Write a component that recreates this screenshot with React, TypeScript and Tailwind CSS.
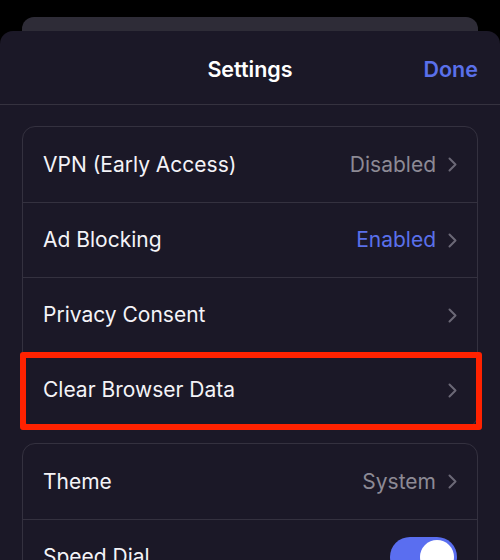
import React from "react";

function Chevron() {
  return (
    <svg width="9" height="15" viewBox="0 0 9 15" className="ml-[12px] shrink-0">
      <polyline points="1.5,1.5 7.5,7.5 1.5,13.5" fill="none" stroke="#6b6876" strokeWidth="2" strokeLinecap="round" strokeLinejoin="round" />
    </svg>
  );
}

function Row({label, value, valueClass, first, children}: any) {
  return (
    <div className={`flex items-center h-[75px] pl-[20px] pr-[20px] ${first ? "" : "border-t border-[#34313f]"}`}>
      <span className="flex-1 text-[21px] text-[#f4f3f7]">{label}</span>
      {value && <span className={`text-[21px] ${valueClass}`}>{value}</span>}
      {children ?? <Chevron />}
    </div>
  );
}

export default function App() {
  return (
    <div className="w-[500px] h-[560px] bg-black overflow-hidden" style={{fontFamily: "Inter, 'Noto Sans', sans-serif"}}>
      <div className="h-[17px]" />
      <div className="mx-[22px] h-[14px] bg-[#2e2c37] rounded-t-[12px]" />
      <div className="bg-[#1b1827] rounded-t-[13px] h-[529px]">
        <div className="relative flex items-center justify-center h-[74px] pt-[3px] border-b border-[#35323f]">
          <span className="text-[21.5px] font-semibold text-white">Settings</span>
          <span className="absolute right-[22px] text-[21.5px] font-semibold text-[#5a70ea]">Done</span>
        </div>

        <div className="mx-[22px] mt-[21px] border border-[#34313f] rounded-[13px]">
          <Row first label="VPN (Early Access)" value="Disabled" valueClass="text-[#8d8a95]" />
          <Row label="Ad Blocking" value="Enabled" valueClass="text-[#5a70ea]" />
          <Row label="Privacy Consent" />
          <div className="relative">
            <Row label="Clear Browser Data" />
            <div className="absolute top-[0px] bottom-[-3px] left-[-3px] right-[-5px] border-[6px] border-[#ff2200] rounded-[3px]" />
          </div>
        </div>

        <div className="mx-[22px] mt-[15px] border border-[#34313f] rounded-[13px]">
          <Row first label="Theme" value="System" valueClass="text-[#8d8a95]" />
          <Row label="Speed Dial">
            <div className="w-[67px] h-[40px] rounded-full bg-[#5a6ef0] flex items-center justify-end pr-[3px]">
              <div className="w-[34px] h-[34px] rounded-full bg-white" />
            </div>
          </Row>
        </div>
      </div>
    </div>
  );
}
